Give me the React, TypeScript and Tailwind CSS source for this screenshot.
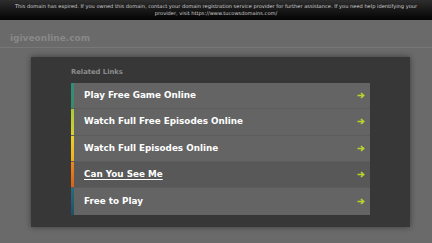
import React from 'react';

const links = [
  { title: 'Play Free Game Online', bar: 'from-[#2f8f78] to-[#3a8a6a]' },
  { title: 'Watch Full Free Episodes Online', bar: 'from-[#a8c83a] to-[#d8d030]' },
  { title: 'Watch Full Episodes Online', bar: 'from-[#e8d02a] to-[#f0b020]' },
  { title: 'Can You See Me', bar: 'from-[#e88a20] to-[#d86018]', active: true },
  { title: 'Free to Play', bar: 'from-[#2a6a80] to-[#1e5068]' },
];

const Arrow = () => (
  <svg width="8" height="7" viewBox="0 0 8 7" className="shrink-0">
    <path d="M0.5 3.5H6.5M4 1L6.7 3.5L4 6" stroke="#b8d42c" strokeWidth="1.6" fill="none" />
  </svg>
);

export default function App() {
  return (
    <div className="w-[432px] h-[243px] bg-[#6a6a6a] overflow-hidden font-['DejaVu_Sans',sans-serif]">
      {/* Expired notice */}
      <div className="h-[20px] bg-gradient-to-b from-[#2e2e2e] to-[#050505] text-[#d0d0d0] text-[5.1px] leading-[7px] text-center pt-[3px] px-[4px]">
        This domain has expired. If you owned this domain, contact your domain registration service provider for further assistance. If you need help identifying your provider, visit https://www.tucowsdomains.com/
      </div>

      {/* Domain */}
      <div className="h-[28px] border-b border-[#777] pl-[10px] pt-[14px] text-[9px] leading-none">
        <span className="text-[#888] font-bold">igiveonline.com</span>
      </div>

      {/* Panel */}
      <div className="ml-[31px] mr-[22px] mt-[9px] h-[170px] bg-[#373737] shadow-[0_0_6px_rgba(0,0,0,0.45)] px-[40px] pt-[12px]">
        <div className="text-[#8c8c8c] font-bold text-[6.8px] leading-none mb-[7px]">Related Links</div>
        <div className="flex flex-col">
          {links.map((l) => (
            <div
              key={l.title}
              className={`flex h-[26.4px] items-center border-b border-[#5c5c5c] last:border-b-0 ${l.active ? 'bg-[#585858]' : 'bg-[#646464]'}`}
            >
              <div className={`w-[3px] self-stretch bg-gradient-to-b ${l.bar}`} />
              <span
                className={`ml-[10px] flex-1 text-white font-bold text-[8.8px] leading-none ${l.active ? 'underline underline-offset-[2px]' : ''}`}
              >
                {l.title}
              </span>
              <div className="mr-[5px]">
                <Arrow />
              </div>
            </div>
          ))}
        </div>
      </div>
    </div>
  );
}
